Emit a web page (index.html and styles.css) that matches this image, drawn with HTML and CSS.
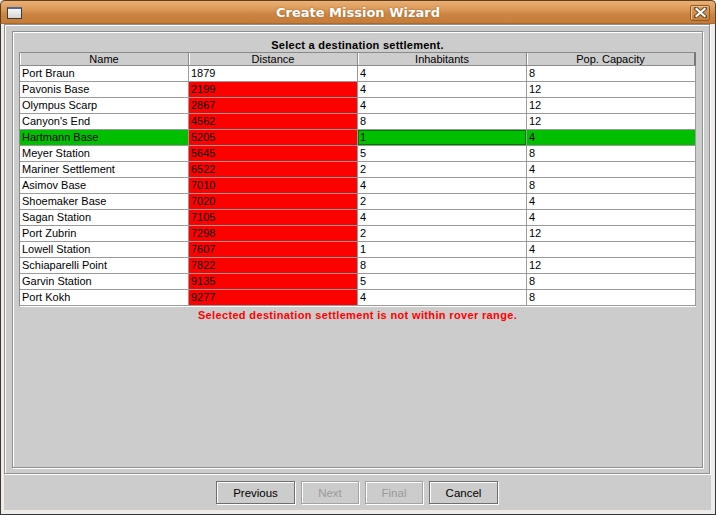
FILE: index.html
```html
<!DOCTYPE html>
<html>
<head>
<meta charset="utf-8">
<title>Create Mission Wizard</title>
<link rel="stylesheet" href="styles.css">
</head>
<body>
<div class="window">
  <div class="titlebar">
    <div class="app-icon"></div>
    <div class="title">Create Mission Wizard</div>
    <div class="close-btn">
      <svg width="13" height="11" viewBox="0 0 13 11">
        <path d="M2 1.5 L11 9.5 M11 1.5 L2 9.5" stroke="#6a4a2a" stroke-width="4" stroke-linecap="square"/>
        <path d="M2.5 2 L10.5 9 M10.5 2 L2.5 9" stroke="#ffffff" stroke-width="2.2" stroke-linecap="square"/>
      </svg>
    </div>
  </div>
  <div class="frame">
    <div class="content">
      <div class="wizard-panel">
        <div class="step-panel">
          <div class="prompt">Select a destination settlement.</div>
          <div class="table">
            <div class="row header">
              <div class="cell">Name</div>
              <div class="cell">Distance</div>
              <div class="cell">Inhabitants</div>
              <div class="cell">Pop. Capacity</div>
            </div>
            <div class="row"><div class="cell">Port Braun</div><div class="cell">1879</div><div class="cell">4</div><div class="cell">8</div></div>
            <div class="row"><div class="cell">Pavonis Base</div><div class="cell red">2199</div><div class="cell">4</div><div class="cell">12</div></div>
            <div class="row"><div class="cell">Olympus Scarp</div><div class="cell red">2867</div><div class="cell">4</div><div class="cell">12</div></div>
            <div class="row"><div class="cell">Canyon's End</div><div class="cell red">4562</div><div class="cell">8</div><div class="cell">12</div></div>
            <div class="row selected"><div class="cell">Hartmann Base</div><div class="cell red">5205</div><div class="cell focus">1</div><div class="cell">4</div></div>
            <div class="row"><div class="cell">Meyer Station</div><div class="cell red">5645</div><div class="cell">5</div><div class="cell">8</div></div>
            <div class="row"><div class="cell">Mariner Settlement</div><div class="cell red">6522</div><div class="cell">2</div><div class="cell">4</div></div>
            <div class="row"><div class="cell">Asimov Base</div><div class="cell red">7010</div><div class="cell">4</div><div class="cell">8</div></div>
            <div class="row"><div class="cell">Shoemaker Base</div><div class="cell red">7020</div><div class="cell">2</div><div class="cell">4</div></div>
            <div class="row"><div class="cell">Sagan Station</div><div class="cell red">7105</div><div class="cell">4</div><div class="cell">4</div></div>
            <div class="row"><div class="cell">Port Zubrin</div><div class="cell red">7298</div><div class="cell">2</div><div class="cell">12</div></div>
            <div class="row"><div class="cell">Lowell Station</div><div class="cell red">7607</div><div class="cell">1</div><div class="cell">4</div></div>
            <div class="row"><div class="cell">Schiaparelli Point</div><div class="cell red">7822</div><div class="cell">8</div><div class="cell">12</div></div>
            <div class="row"><div class="cell">Garvin Station</div><div class="cell red">9135</div><div class="cell">5</div><div class="cell">8</div></div>
            <div class="row"><div class="cell">Port Kokh</div><div class="cell red">9277</div><div class="cell">4</div><div class="cell">8</div></div>
          </div>
          <div class="error">Selected destination settlement is not within rover range.</div>
        </div>
      </div>
      <div class="buttons">
        <button class="btn btn-prev">Previous</button>
        <button class="btn btn-next" disabled>Next</button>
        <button class="btn btn-final" disabled>Final</button>
        <button class="btn btn-cancel">Cancel</button>
      </div>
    </div>
  </div>
</div>
</body>
</html>
```

FILE: styles.css
```css
html, body {
  margin: 0;
  padding: 0;
  width: 716px;
  height: 515px;
  overflow: hidden;
  background: #efebe7;
}

.window {
  width: 716px;
  height: 515px;
  display: flex;
  flex-direction: column;
  font-family: "Liberation Sans", Arial, sans-serif;
}

.titlebar {
  height: 24px;
  box-sizing: border-box;
  flex: none;
  display: flex;
  align-items: center;
  border: 1px solid #5e3f22;
  border-bottom: 1px solid #a86a30;
  border-radius: 5px 5px 0 0;
  background: linear-gradient(#eab075 0%, #dd9b5a 35%, #cd8443 60%, #c67c38 100%);
}

.app-icon {
  width: 13px;
  height: 9px;
  margin-left: 6px;
  margin-top: 1px;
  background: linear-gradient(#f4f4f4, #d6d6d6);
  border: 1px solid #3a3a3a;
  border-top: 2px solid #4a6a98;
}

.title {
  flex: 1;
  text-align: center;
  color: #ffffff;
  font-family: "DejaVu Sans", sans-serif;
  font-weight: bold;
  font-size: 13px;
  text-shadow: 0 0 2px rgba(90, 50, 10, 0.45);
  margin-left: 4px;
}

.close-btn {
  width: 20px;
  height: 16px;
  margin-right: 5px;
  margin-top: 1px;
  box-sizing: border-box;
  border: 1px solid #8e5a28;
  border-radius: 2px;
  box-shadow: inset 1px 1px 0 #f0c08e;
  background: linear-gradient(#dc9f62, #c77f3c);
  display: flex;
  align-items: center;
  justify-content: center;
}

.frame {
  flex: 1;
  display: flex;
  border-left: 1px solid #3a3836;
  border-right: 1px solid #3a3836;
  border-bottom: 1px solid #3a3836;
  padding: 0 4px 4px 3px;
  background: #efebe7;
}

.content {
  flex: 1;
  background: #cccccc;
  display: flex;
  flex-direction: column;
}

.wizard-panel {
  width: 706px;
  height: 450px;
  box-sizing: border-box;
  border: 1px solid #8f8f8f;
  box-shadow: inset 1px 1px 0 #ffffff, 1px 1px 0 #ffffff;
  padding: 6px 0 0 7px;
}

.step-panel {
  width: 691px;
  height: 437px;
  box-sizing: border-box;
  border: 1px solid #8f8f8f;
  box-shadow: inset 1px 1px 0 #ffffff, 1px 1px 0 #ffffff;
  padding: 0 0 0 6px;
  display: flex;
  flex-direction: column;
}

.prompt {
  height: 14px;
  margin-top: 6px;
  line-height: 14px;
  font-size: 11px;
  font-weight: bold;
  letter-spacing: 0.25px;
  text-align: center;
  color: #000;
  padding-right: 6px;
}

.table {
  width: 677px;
  box-sizing: border-box;
  border-top: 1px solid #8a8a8a;
  border-left: 1px solid #8a8a8a;
  border-bottom: 1px solid #ffffff;
  display: flex;
  flex-direction: column;
  font-size: 11px;
  color: #000;
}

.row {
  display: grid;
  grid-template-columns: 169px 169px 169px 169px;
  height: 16px;
  background: #ffffff;
}

.cell {
  box-sizing: border-box;
  border-right: 1px solid #9a9a9a;
  border-bottom: 1px solid #9a9a9a;
  padding-left: 2px;
  line-height: 15px;
  white-space: nowrap;
  overflow: hidden;
}

.header {
  height: 13px;
  background: #cccccc;
}

.header .cell {
  line-height: 12px;
  text-align: center;
  padding-left: 0;
  background: #cdcdcd;
  box-shadow: inset 1px 0 0 #ffffff;
  border-right: 1px solid #8a8a8a;
  border-bottom: 1px solid #8a8a8a;
}

.header .cell:last-child {
  border-right: 2px solid #777777;
}

.red {
  background: #ff0000;
}

.selected .cell {
  background: #00bf00;
}

.selected .cell.red {
  background: #ff0000;
}

.selected .cell.focus {
  box-shadow: inset 0 0 0 1px #007a00;
}

.error {
  margin-top: 1px;
  text-align: center;
  font-size: 11px;
  font-weight: bold;
  letter-spacing: 0.35px;
  color: #ff0000;
  padding-right: 6px;
  line-height: 14px;
}

.buttons {
  flex: 1;
  display: flex;
  justify-content: center;
  align-items: flex-start;
  gap: 6px;
  padding-top: 7px;
  padding-right: 1px;
}

.btn {
  height: 23px;
  box-sizing: border-box;
  margin: 0;
  padding: 0;
  border: 1px solid #6e6e6e;
  box-shadow: inset 1px 1px 0 #ffffff, 1px 1px 0 #ffffff;
  background: #cccccc;
  font-family: "Liberation Sans", Arial, sans-serif;
  font-size: 11.5px;
  color: #000000;
  border-radius: 0;
}

.btn:disabled {
  border-color: #a3a3a3;
  color: #9a9a9a;
}

.btn-prev { width: 79px; }
.btn-next { width: 58px; }
.btn-final { width: 58px; }
.btn-cancel { width: 69px; }
```
